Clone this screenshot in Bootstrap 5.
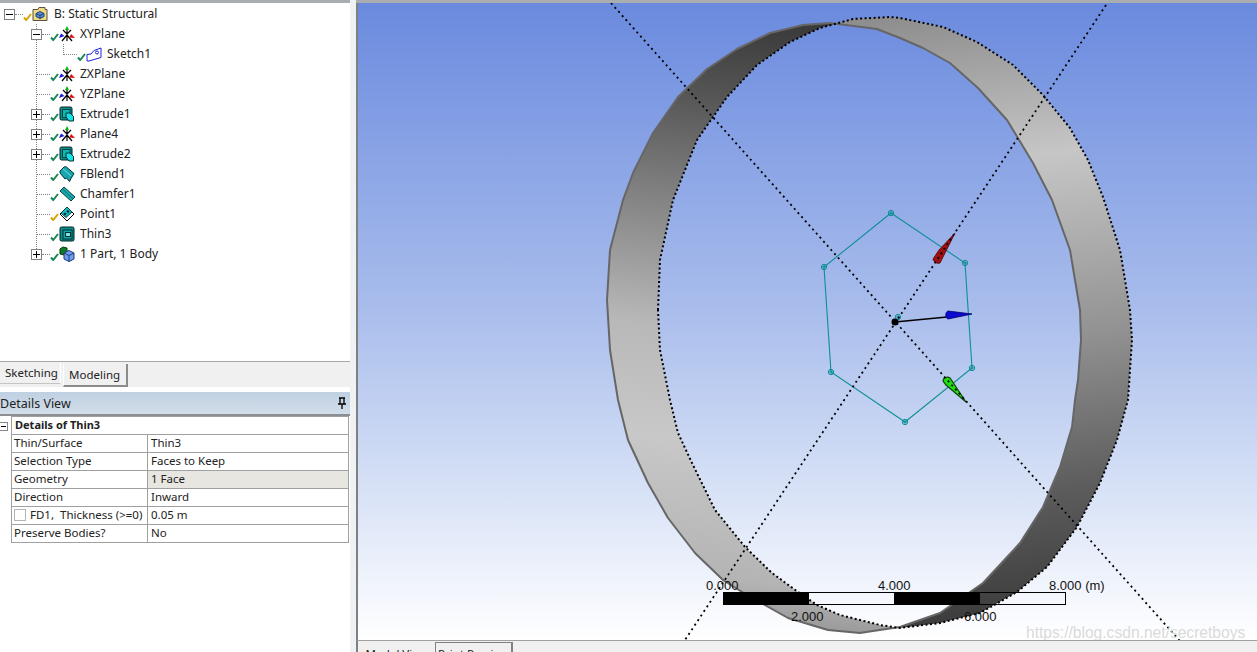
<!DOCTYPE html>
<html lang="en">
<head>
    <meta charset="UTF-8">
    <title>Static Structural - Thin3</title>
    <link href="https://cdn.jsdelivr.net/npm/bootstrap@5.3.3/dist/css/bootstrap.min.css" rel="stylesheet">
    <style>
        html, body { height: 652px; overflow: hidden; }
        body { font-family: "Noto Sans", "Liberation Sans", sans-serif; font-size: 12px; color: #222; background: #f0f0f0; }
        .dm-shell { height: 652px; }

        /* Left pane */
        .dm-left { width: 350px; flex: none; }
        .dm-tree { height: 361px; background: #fff; border-top: 3px solid #a9adb0; padding-top: 1px; }
        .tree-row { height: 20px; --vline: repeating-linear-gradient(to bottom, #808080 0 1px, transparent 1px 2px); }
        .tree-line { background: var(--vline) 36px 0 / 1px 100% no-repeat; }
        .tree-line-end { background: var(--vline) 36px 0 / 1px 50% no-repeat; }
        .tree-sketch { background: var(--vline) 36px 0 / 1px 100% no-repeat, var(--vline) 63px 0 / 1px 50% no-repeat; padding-left: 63px; }
        .tree-root { padding-left: 4px; }
        .tree-node { padding-left: 31px; }
        .tree-leaf { padding-left: 37px; }
        .tree-toggle { width: 11px; height: 11px; flex: none; border: 1px solid #808080; background: #fff; position: relative; }
        .tree-toggle::before { content: ""; position: absolute; left: 1px; right: 1px; top: 4px; height: 1px; background: #000; }
        .tree-plus::after { content: ""; position: absolute; top: 1px; bottom: 1px; left: 4px; width: 1px; background: #000; }
        .tree-dash { height: 0; flex: none; border-top: 1px dotted #808080; }
        .tree-dash-root { width: 8px; }
        .tree-dash-node { width: 8px; }
        .tree-dash-leaf { width: 13px; }
        .tree-dash-sketch { width: 14px; }
        .tree-check { width: 9px; height: 8px; flex: none; margin-top: 9px; align-self: flex-start; }
        .tree-icon { width: 16px; height: 16px; flex: none; }
        .tree-label { margin-left: 5px; white-space: nowrap; line-height: 20px; }
        .tree-root .tree-label { margin-left: 6px; }

        .dm-tabs { height: 26px; border-top: 1px solid #a8a8a8; background: #f0f0f0; }
        .dm-tab { font-size: 11.5px; line-height: 22px; padding: 0 5px; background: #f0f0f0; }
        .dm-tab-off { width: 61px; height: 22px; border-right: 1px solid #fff; border-bottom: 1px solid #c4c4c4; }
        .dm-tab-on { width: 65px; height: 23px; margin: 2px 0 0 2px; line-height: 20px; border-right: 2px solid #8c8c8c; border-bottom: 2px solid #8c8c8c; border-left: 1px solid #fff; padding-top: 1px; }
        .dm-gap { height: 5px; background: #fff; }
        .dm-details-head { height: 24px; background: linear-gradient(#bfd0e2, #d2dee9); border-bottom: 2px solid #8b8f94; font-size: 12.5px; line-height: 23px; }
        .dm-details { background: #fff; height: 236px; position: relative; }
        .dm-collapse { position: absolute; left: 0; top: 6px; width: 8px; height: 9px; border: 1px solid #888; border-left: 0; }
        .dm-collapse::before { content: ""; position: absolute; left: 1px; right: 1px; top: 3px; height: 1px; background: #000; }
        .dm-table { width: 338px; margin: 0 0 0 11px; table-layout: fixed; border-color: #a0a0a0; --bs-table-border-color: #a0a0a0; color: #222; }
        .dm-table td { height: 18px; padding: 0 3px; font-size: 11.5px; line-height: 16px; white-space: nowrap; overflow: hidden; }
        .dm-table td:first-child { padding-left: 2px; }
        .dm-table td.dm-group { padding-left: 3px; font-size: 11px; }
        .dm-col-a { width: 136px; }
        .dm-cell-sel { --bs-table-bg: #e8e6e1; background: #e8e6e1; }
        .dm-fd { width: 12px; height: 12px; border: 1px solid #b4b4b4; margin: 0 4px 0 0; flex: none; }

        /* Splitter and graphics area */
        .dm-split { width: 6px; flex: none; background: #eff2f5; }
        .dm-right { flex: 1; min-width: 0; }
        .dm-top { height: 3px; background: #a9adb0; }
        .dm-view { height: 638px; border-left: 2px solid #808080; border-bottom: 1px solid #a0a0a0; background: linear-gradient(#6a8ade, #a9bdec 48%, #d5e0f6 75%, #fff); }
        .dm-view svg { display: block; width: 100%; height: 100%; font-family: "Liberation Sans", sans-serif; }
        .dm-bottom { height: 11px; border-left: 2px solid #808080; background: #f0f0f0; overflow: hidden; }
        .dm-btab { height: 26px; flex: none; font-size: 11.5px; text-align: center; white-space: nowrap; }
        .dm-btab-on { width: 77px; line-height: 26px; }
        .dm-btab-off { width: 78px; border-left: 1px solid #808080; border-right: 2px solid #808080; border-top: 1px solid #808080; margin-top: 1px; line-height: 22px; }
    </style>
</head>
<body>
    <!-- Shared tree icons -->
    <svg width="0" height="0" class="position-absolute">
        <defs>
            <symbol id="i-check" viewBox="0 0 9 8"><path d="M1 4.5 3.2 7 8 1" fill="none" stroke="currentColor" stroke-width="2"/></symbol>
            <symbol id="i-root" viewBox="0 0 16 16">
                <path d="M1 3.5h5l1-2h6v2h2v11H1z" fill="#f2da83" stroke="#57533a"/>
                <path d="M4 7.5 8 5.5l4 2v3l-4 2-4-2z" fill="#5b8fd6" stroke="#1b3d78"/>
                <path d="M4 7.5 8 9.5l4-2M8 9.5v3" fill="none" stroke="#1b3d78"/>
            </symbol>
            <symbol id="i-plane" viewBox="0 0 16 16">
                <path d="M8 3v12M8 9l-5 6M8 9l5 6M8 8 4 4M8 8l4-4" fill="none" stroke="#000" stroke-width="1.200"/>
                <path d="M8 0l2 4H6z" fill="#00b800"/>
                <path d="M0 12l2-4.500L5.500 10z" fill="#1a1ae0"/>
                <path d="M16 12l-5.500-.5L12 8z" fill="#e00000"/>
            </symbol>
            <symbol id="i-sketch" viewBox="0 0 16 16">
                <path d="M1 8.500 5 8 8 4.500 15 2v9.500L3 15H1z" fill="#fff" stroke="#1f22d6"/>
                <circle cx="11" cy="6.500" r="1.500" fill="none" stroke="#1f22d6"/>
            </symbol>
            <symbol id="i-extrude" viewBox="0 0 16 16">
                <rect x="1" y="1" width="12" height="13" rx="1.500" fill="#0d8c8c" stroke="#022"/>
                <rect x="3.500" y="3.500" width="7.500" height="8" fill="#14b3b3" stroke="#044"/>
                <path d="M7 7h4l3.500 3.500V15h-4.500L7 11z" fill="#19e0e6" stroke="#033"/>
            </symbol>
            <symbol id="i-blend" viewBox="0 0 16 16">
                <path d="M1 5 5 1c1-.5 2-.5 3 .5l7 6-3 5-1.500 3-3-3.500-1.500 1L1 7z" fill="#19a5ad" stroke="#033"/>
                <path d="M4 3l8 7" stroke="#6fe0e4" fill="none"/>
            </symbol>
            <symbol id="i-chamfer" viewBox="0 0 16 16">
                <path d="M1 5l4-4 11 10-4 4z" fill="#18a8ad" stroke="#044"/>
                <path d="M3.500 3l10 9.500" stroke="#0b6f73" fill="none"/>
            </symbol>
            <symbol id="i-point" viewBox="0 0 16 16">
                <path d="M8 1l7 7-7 7-7-7z" fill="#fff" stroke="#000"/>
                <path d="M2 7 8 1l5 5-6 5.500z" fill="#14b8bd" stroke="#044"/>
                <circle cx="9" cy="5.500" r="1.300" fill="#033"/><circle cx="6" cy="8" r="1.300" fill="#033"/>
            </symbol>
            <symbol id="i-thin" viewBox="0 0 16 16">
                <rect x="1" y="1" width="14" height="14" rx="1.500" fill="#0d8c8c" stroke="#022"/>
                <rect x="4" y="4" width="9" height="9" fill="#12a5a8" stroke="#033"/>
                <rect x="6.500" y="6.500" width="5" height="4" fill="#7fe3e3" stroke="#033"/>
            </symbol>
            <symbol id="i-body" viewBox="0 0 16 16">
                <path d="M1 3l3-2 4 1v5l-3 2-4-1z" fill="#0f7a25" stroke="#033b10"/>
                <path d="M5 7l5-2.500L15 7v6l-5 2.500L5 13z" fill="#6f9eea" stroke="#203a80"/>
                <path d="M5 7l5 2.500L15 7M10 9.500v6" fill="none" stroke="#203a80"/>
            </symbol>
        </defs>
    </svg>

    <div class="dm-shell d-flex">
        <div class="dm-left d-flex flex-column">
            <!-- Outline tree -->
            <div class="dm-tree">
                <div class="tree-row tree-root d-flex align-items-center">
                    <span class="tree-toggle"></span><span class="tree-dash tree-dash-root"></span>
                    <svg class="tree-check" style="color:#d8a400"><use href="#i-check"/></svg>
                    <svg class="tree-icon"><use href="#i-root"/></svg>
                    <span class="tree-label">B: Static Structural</span>
                </div>
                <div class="tree-row tree-node tree-line d-flex align-items-center">
                    <span class="tree-toggle"></span><span class="tree-dash tree-dash-node"></span>
                    <svg class="tree-check text-success"><use href="#i-check"/></svg>
                    <svg class="tree-icon"><use href="#i-plane"/></svg>
                    <span class="tree-label">XYPlane</span>
                </div>
                <div class="tree-row tree-sketch d-flex align-items-center">
                    <span class="tree-dash tree-dash-sketch"></span>
                    <svg class="tree-check text-success"><use href="#i-check"/></svg>
                    <svg class="tree-icon"><use href="#i-sketch"/></svg>
                    <span class="tree-label">Sketch1</span>
                </div>
                <div class="tree-row tree-leaf tree-line d-flex align-items-center">
                    <span class="tree-dash tree-dash-leaf"></span>
                    <svg class="tree-check text-success"><use href="#i-check"/></svg>
                    <svg class="tree-icon"><use href="#i-plane"/></svg>
                    <span class="tree-label">ZXPlane</span>
                </div>
                <div class="tree-row tree-leaf tree-line d-flex align-items-center">
                    <span class="tree-dash tree-dash-leaf"></span>
                    <svg class="tree-check text-success"><use href="#i-check"/></svg>
                    <svg class="tree-icon"><use href="#i-plane"/></svg>
                    <span class="tree-label">YZPlane</span>
                </div>
                <div class="tree-row tree-node tree-line d-flex align-items-center">
                    <span class="tree-toggle tree-plus"></span><span class="tree-dash tree-dash-node"></span>
                    <svg class="tree-check text-success"><use href="#i-check"/></svg>
                    <svg class="tree-icon"><use href="#i-extrude"/></svg>
                    <span class="tree-label">Extrude1</span>
                </div>
                <div class="tree-row tree-node tree-line d-flex align-items-center">
                    <span class="tree-toggle tree-plus"></span><span class="tree-dash tree-dash-node"></span>
                    <svg class="tree-check text-success"><use href="#i-check"/></svg>
                    <svg class="tree-icon"><use href="#i-plane"/></svg>
                    <span class="tree-label">Plane4</span>
                </div>
                <div class="tree-row tree-node tree-line d-flex align-items-center">
                    <span class="tree-toggle tree-plus"></span><span class="tree-dash tree-dash-node"></span>
                    <svg class="tree-check text-success"><use href="#i-check"/></svg>
                    <svg class="tree-icon"><use href="#i-extrude"/></svg>
                    <span class="tree-label">Extrude2</span>
                </div>
                <div class="tree-row tree-leaf tree-line d-flex align-items-center">
                    <span class="tree-dash tree-dash-leaf"></span>
                    <svg class="tree-check text-success"><use href="#i-check"/></svg>
                    <svg class="tree-icon"><use href="#i-blend"/></svg>
                    <span class="tree-label">FBlend1</span>
                </div>
                <div class="tree-row tree-leaf tree-line d-flex align-items-center">
                    <span class="tree-dash tree-dash-leaf"></span>
                    <svg class="tree-check text-success"><use href="#i-check"/></svg>
                    <svg class="tree-icon"><use href="#i-chamfer"/></svg>
                    <span class="tree-label">Chamfer1</span>
                </div>
                <div class="tree-row tree-leaf tree-line d-flex align-items-center">
                    <span class="tree-dash tree-dash-leaf"></span>
                    <svg class="tree-check" style="color:#d8a400"><use href="#i-check"/></svg>
                    <svg class="tree-icon"><use href="#i-point"/></svg>
                    <span class="tree-label">Point1</span>
                </div>
                <div class="tree-row tree-leaf tree-line d-flex align-items-center">
                    <span class="tree-dash tree-dash-leaf"></span>
                    <svg class="tree-check text-success"><use href="#i-check"/></svg>
                    <svg class="tree-icon"><use href="#i-thin"/></svg>
                    <span class="tree-label">Thin3</span>
                </div>
                <div class="tree-row tree-node tree-line-end d-flex align-items-center">
                    <span class="tree-toggle tree-plus"></span><span class="tree-dash tree-dash-node"></span>
                    <svg class="tree-check text-success"><use href="#i-check"/></svg>
                    <svg class="tree-icon"><use href="#i-body"/></svg>
                    <span class="tree-label">1 Part, 1 Body</span>
                </div>
            </div>

            <div class="dm-tabs d-flex align-items-start">
                <div class="dm-tab dm-tab-off">Sketching</div>
                <div class="dm-tab dm-tab-on">Modeling</div>
            </div>
            <div class="dm-gap"></div>

            <!-- Details View -->
            <div class="dm-details-head d-flex justify-content-between">
                <span>Details View</span>
                <svg width="16" height="22" viewBox="0 0 16 22"><path d="M5 6h6M6 6v6M10 6v6M4 12h8M8 12v5" fill="none" stroke="#000" stroke-width="1.300"/></svg>
            </div>
            <div class="dm-details">
                <span class="dm-collapse"></span>
                <table class="table table-bordered dm-table">
                    <colgroup><col class="dm-col-a"><col></colgroup>
                    <tbody>
                        <tr><td colspan="2" class="fw-bold dm-group">Details of Thin3</td></tr>
                        <tr><td>Thin/Surface</td><td>Thin3</td></tr>
                        <tr><td>Selection Type</td><td>Faces to Keep</td></tr>
                        <tr><td>Geometry</td><td class="dm-cell-sel">1 Face</td></tr>
                        <tr><td>Direction</td><td>Inward</td></tr>
                        <tr><td><div class="d-flex align-items-center"><span class="dm-fd"></span>FD1,&nbsp; Thickness (&gt;=0)</div></td><td>0.05 m</td></tr>
                        <tr><td>Preserve Bodies?</td><td>No</td></tr>
                    </tbody>
                </table>
            </div>
        </div>

        <div class="dm-split"></div>

        <div class="dm-right d-flex flex-column">
            <div class="dm-top"></div>
            <div class="dm-view">
                <svg viewBox="358 3 899 637" preserveAspectRatio="none">
                    <defs>
                        <linearGradient id="bandLeft" gradientUnits="userSpaceOnUse" x1="790" y1="30" x2="720" y2="640">
                            <stop offset="0" stop-color="#3c3c3c"/>
                            <stop offset=".12" stop-color="#555"/>
                            <stop offset=".5" stop-color="#b8b8b8"/>
                            <stop offset=".68" stop-color="#c8c8c8"/>
                            <stop offset=".9" stop-color="#b4b4b4"/>
                            <stop offset="1" stop-color="#8c8c8c"/>
                        </linearGradient>
                        <linearGradient id="bandRight" gradientUnits="userSpaceOnUse" x1="880" y1="20" x2="950" y2="625">
                            <stop offset="0" stop-color="#8e8e8e"/>
                            <stop offset=".25" stop-color="#c6c6c6"/>
                            <stop offset=".55" stop-color="#929292"/>
                            <stop offset=".8" stop-color="#5c5c5c"/>
                            <stop offset="1" stop-color="#3c3c3c"/>
                        </linearGradient>
                        <clipPath id="clipLeft"><polygon points="358,0 835,0 897,652 358,652"/></clipPath>
                        <clipPath id="clipRight"><polygon points="835,0 1257,0 1257,652 897,652"/></clipPath>
                        <!-- Traced rims: back edge, then front (dotted) edge; even-odd leaves the inner wall -->
                        <path id="ringWall" fill-rule="evenodd" d="M607 300 610 250 623 200 633 173 653 133 678 97 707 69 737 49 770 33 803 25 830 23 877 29 900 38 923 48 950 63 978 88 1007 120 1033 163 1052 200 1070 250 1080 310 1081 340 1078 380 1075 400 1072 427 1060 467 1043 507 1020 543 983 583 940 613 900 627 873 631 860 633 828 630 788 618 742 592 723 580 695 553 668 518 648 483 628 440 618 400 610 350zM658 310 660 260 673 200 697 140 727 97 757 65 790 42 820 28 853 19 890 17 900 18 943 27 977 42 1013 65 1043 95 1070 128 1088 160 1103 197 1120 250 1130 310 1132 340 1128 400 1117 440 1100 483 1077 527 1047 567 1017 592 980 613 940 623 900 628 880 625 840 615 817 605 798 592 772 573 745 547 715 510 692 463 678 433 670 400 660 350z"/>
                        <path id="rimBack" d="M607 300 610 250 623 200 633 173 653 133 678 97 707 69 737 49 770 33 803 25 830 23 877 29 900 38 923 48 950 63 978 88 1007 120 1033 163 1052 200 1070 250 1080 310 1081 340 1078 380 1075 400 1072 427 1060 467 1043 507 1020 543 983 583 940 613 900 627 873 631 860 633 828 630 788 618 742 592 723 580 695 553 668 518 648 483 628 440 618 400 610 350z"/>
                        <path id="rimFront" d="M658 310 660 260 673 200 697 140 727 97 757 65 790 42 820 28 853 19 890 17 900 18 943 27 977 42 1013 65 1043 95 1070 128 1088 160 1103 197 1120 250 1130 310 1132 340 1128 400 1117 440 1100 483 1077 527 1047 567 1017 592 980 613 940 623 900 628 880 625 840 615 817 605 798 592 772 573 745 547 715 510 692 463 678 433 670 400 660 350z"/>
                    </defs>

                    <!-- Ring -->
                    <g clip-path="url(#clipLeft)"><use href="#ringWall" fill="url(#bandLeft)"/></g>
                    <g clip-path="url(#clipRight)"><use href="#ringWall" fill="url(#bandRight)"/></g>
                    <use href="#rimBack" fill="none" stroke="#666" stroke-width="2" stroke-linejoin="round"/>
                    <use href="#rimFront" fill="none" stroke="#000" stroke-width="2" stroke-dasharray="2 2.500"/>

                    <!-- Sketch -->
                    <polygon points="891,213 965,263 972,368 905,422 831,372 824,267" fill="none" stroke="#0f8f96" stroke-width="1.100"/>
                    <g fill="none" stroke="#0f8f96">
                        <circle cx="891" cy="213" r="2.700"/><circle cx="965" cy="263" r="2.700"/><circle cx="972" cy="368" r="2.700"/>
                        <circle cx="905" cy="422" r="2.700"/><circle cx="831" cy="372" r="2.700"/><circle cx="824" cy="267" r="2.700"/>
                        <circle cx="898" cy="317" r="2.700"/>
                        <path d="M888 213h6M962 263h6M969 368h6M902 422h6M828 372h6M821 267h6M895 317h6M891 210v6M965 260v6M972 365v6M905 419v6M831 369v6M824 264v6M898 314v6"/>
                    </g>

                    <!-- Axis triad -->
                    <path d="M895 322 947 317" stroke="#000" stroke-width="1.300"/>
                    <circle cx="895" cy="322" r="3.500" fill="#000"/>
                    <path d="M972 314 948 311c-3 1-3 7 0 8z" fill="#0a0ad0" stroke="#00006a" stroke-width=".8"/>
                    <path d="M955 233 939 250 933 259c1 4 5 5 7 4z" fill="#a01010" stroke="#500" stroke-width=".8"/>
                    <path d="M966 402 950 378c-3-2-7 0-7 3l3 4z" fill="#22dd11" stroke="#0a4a0a" stroke-width="1.200"/>

                    <!-- Construction lines -->
                    <path d="M611 3 1180 641M1106 5 685 640" fill="none" stroke="#000" stroke-width="1.800" stroke-dasharray="2 3.500"/>

                    <!-- Scale bar -->
                    <rect x="723.500" y="592.500" width="342" height="12" fill="none" stroke="#000"/>
                    <rect x="723" y="592" width="86" height="13" fill="#000"/>
                    <rect x="894" y="592" width="86" height="13" fill="#000"/>
                    <g font-size="13" fill="#111">
                        <text x="706" y="589.500">0.000</text>
                        <text x="878" y="589.500">4.000</text>
                        <text x="1049" y="589.500">8.000 (m)</text>
                        <text x="791" y="621">2.000</text>
                        <text x="964" y="621">6.000</text>
                    </g>
                    <text x="1026" y="638" font-size="15.600" fill="#d0d0d0" fill-opacity=".8">https://blog.csdn.net/secretboys</text>
                </svg>
            </div>
            <div class="dm-bottom d-flex">
                <div class="dm-btab dm-btab-on">Model View</div>
                <div class="dm-btab dm-btab-off">Print Preview</div>
            </div>
        </div>
    </div>

    <script src="https://cdn.jsdelivr.net/npm/bootstrap@5.3.3/dist/js/bootstrap.bundle.min.js"></script>
</body>
</html>
